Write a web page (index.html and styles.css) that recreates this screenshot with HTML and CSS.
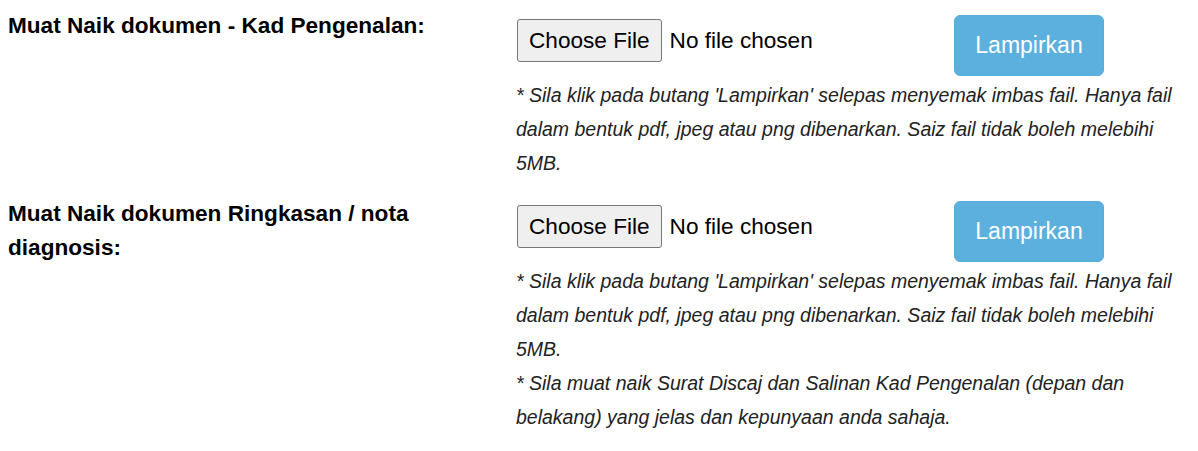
FILE: index.html
```html
<!DOCTYPE html>
<html lang="ms">
<head>
<meta charset="utf-8">
<title>Muat Naik Dokumen</title>
<link rel="stylesheet" href="styles.css">
</head>
<body>
<form class="upload-form">
  <div class="form-row">
    <label class="field-label" for="ic">Muat Naik dokumen - Kad Pengenalan:</label>
    <div class="field-body">
      <div class="upload-line">
        <input class="file-input" type="file" id="ic">
        <button type="button" class="btn-attach">Lampirkan</button>
      </div>
      <p class="help">* Sila klik pada butang 'Lampirkan' selepas menyemak imbas fail. Hanya fail dalam bentuk pdf, jpeg atau png dibenarkan. Saiz fail tidak boleh melebihi 5MB.</p>
    </div>
  </div>
  <div class="form-row">
    <label class="field-label" for="diag">Muat Naik dokumen Ringkasan / nota diagnosis:</label>
    <div class="field-body">
      <div class="upload-line">
        <input class="file-input" type="file" id="diag">
        <button type="button" class="btn-attach">Lampirkan</button>
      </div>
      <p class="help">* Sila klik pada butang 'Lampirkan' selepas menyemak imbas fail. Hanya fail dalam bentuk pdf, jpeg atau png dibenarkan. Saiz fail tidak boleh melebihi 5MB.</p>
      <p class="help">* Sila muat naik Surat Discaj dan Salinan Kad Pengenalan (depan dan belakang) yang jelas dan kepunyaan anda sahaja.</p>
    </div>
  </div>
</form>
</body>
</html>
```

FILE: styles.css
```css
body {
  margin: 8px;
  background: #ffffff;
  font-family: "Liberation Sans", Arial, sans-serif;
  color: #000;
}

.upload-form {
  display: flex;
  flex-direction: column;
  gap: 15px;
  padding-top: 1px;
}

.form-row {
  display: grid;
  grid-template-columns: 508px 1fr;
}

.field-label {
  font-weight: bold;
  font-size: 22.6px;
  line-height: 34px;
  padding-right: 8px;
}

.form-row + .form-row .field-label {
  padding-top: 2px;
}

.field-body {
  display: flex;
  flex-direction: column;
}

.upload-line {
  display: flex;
  align-items: flex-start;
  padding-top: 6px;
}

.file-input {
  width: 436px;
  margin: 4px 0 0 1px;
  padding: 0;
  font-family: "Liberation Sans", Arial, sans-serif;
  font-size: 22.6px;
  color: #000;
}

.file-input::file-selector-button {
  font-family: "Liberation Sans", Arial, sans-serif;
  font-size: 22.6px;
  color: #000;
  background: #efefef;
  border: 1px solid #767676;
  border-radius: 3px;
  padding: 8px 11px 7px;
  margin: 0 8px 0 0;
  line-height: 26px;
}

.btn-attach {
  font-family: "Liberation Sans", Arial, sans-serif;
  font-size: 23px;
  line-height: 27px;
  color: #ffffff;
  background: #5bb0de;
  border: 1px solid #5aaedb;
  border-radius: 6px;
  padding: 16px 20px;
  width: 150px;
  margin-left: 1px;
  cursor: pointer;
}

.help {
  margin: 2px 0 0 0;
  font-style: italic;
  font-size: 19.5px;
  line-height: 34px;
  color: #222;
}

.help + .help {
  margin-top: 0;
}
```
